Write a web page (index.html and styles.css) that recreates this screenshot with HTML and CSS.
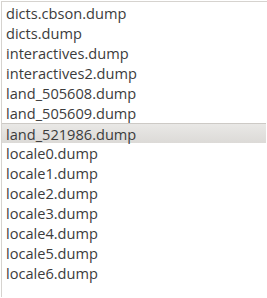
FILE: index.html
```html
<!DOCTYPE html>
<html lang="en">
<head>
  <meta charset="UTF-8">
  <title>Dump files</title>
  <link rel="stylesheet" href="styles.css">
</head>
<body>
  <ul class="file-list">
    <li class="file-item">dicts.cbson.dump</li>
    <li class="file-item">dicts.dump</li>
    <li class="file-item">interactives.dump</li>
    <li class="file-item">interactives2.dump</li>
    <li class="file-item">land_505608.dump</li>
    <li class="file-item">land_505609.dump</li>
    <li class="file-item selected">land_521986.dump</li>
    <li class="file-item">locale0.dump</li>
    <li class="file-item">locale1.dump</li>
    <li class="file-item">locale2.dump</li>
    <li class="file-item">locale3.dump</li>
    <li class="file-item">locale4.dump</li>
    <li class="file-item">locale5.dump</li>
    <li class="file-item">locale6.dump</li>
  </ul>
</body>
</html>
```

FILE: styles.css
```css
body {
  margin: 0;
  padding: 0;
  background: #fff;
  font-family: 'Open Sans', 'DejaVu Sans', sans-serif;
  font-size: 14.6px;
  color: #3c3c3c;
}

.file-list {
  list-style-type: none;
  margin: 1px 0 0 1px;
  padding: 1px 0 0 0;
  height: 296px;
  border-top: 1px solid #d6d3cf;
  border-left: 1px solid #d6d3cf;
  box-sizing: border-box;
}

.file-item {
  height: 20px;
  line-height: 20px;
  padding-left: 4px;
  white-space: nowrap;
}

.selected {
  box-sizing: border-box;
  border-top: 1px solid #cdcac6;
  margin-right: 1px;
  background: linear-gradient(#e9e8e6, #dcdad7);
}
```
